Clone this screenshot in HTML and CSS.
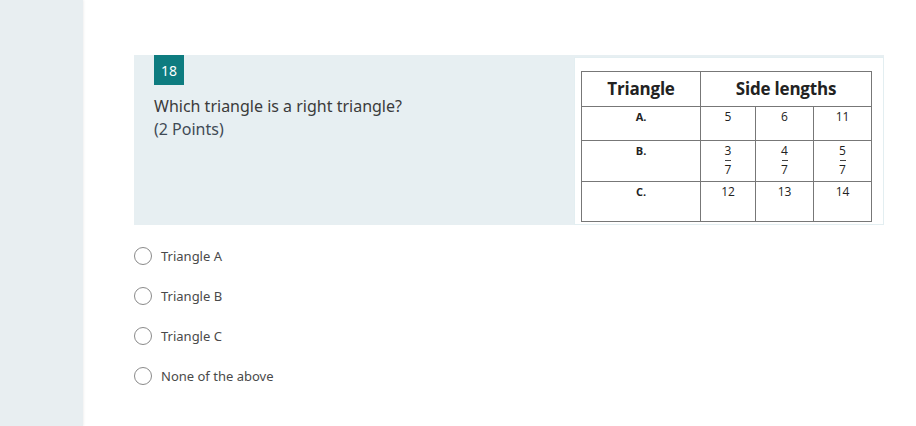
FILE: index.html
```html
<!DOCTYPE html>
<html>
<head>
<meta charset="utf-8">
<link rel="stylesheet" href="styles.css">
</head>
<body>
<div class="page">
  <aside class="sidebar"></aside>
  <main class="main">
    <section class="card">
      <div class="card-left">
        <div class="badge">18</div>
        <div class="question">Which triangle is a right triangle?<br><span class="points">(2 Points)</span></div>
      </div>
      <div class="figure">
        <table class="tri">
          <colgroup><col class="c1"><col class="c2"><col class="c3"><col class="c4"></colgroup>
          <tr class="head"><th>Triangle</th><th colspan="3">Side lengths</th></tr>
          <tr class="ra"><td class="lbl">A.</td><td>5</td><td>6</td><td>11</td></tr>
          <tr class="rb"><td class="lbl">B.</td>
            <td><span class="frac"><span>3</span><span class="bar"></span><span>7</span></span></td>
            <td><span class="frac"><span>4</span><span class="bar"></span><span>7</span></span></td>
            <td><span class="frac"><span>5</span><span class="bar"></span><span>7</span></span></td></tr>
          <tr class="rc"><td class="lbl">C.</td><td>12</td><td>13</td><td>14</td></tr>
        </table>
      </div>
    </section>
    <ul class="options">
      <li><span class="radio"></span><span>Triangle A</span></li>
      <li><span class="radio"></span><span>Triangle B</span></li>
      <li><span class="radio"></span><span>Triangle C</span></li>
      <li><span class="radio"></span><span>None of the above</span></li>
    </ul>
  </main>
</div>
</body>
</html>
```
FILE: styles.css
```css
html, body { margin: 0; padding: 0; background: #fff; }
body { font-family: "Noto Sans", "Open Sans", sans-serif; color: #333; }
.page { display: flex; width: 916px; height: 426px; overflow: hidden; }
.sidebar { width: 83px; flex: none; background: #e8eef1; box-shadow: 1px 0 2px rgba(0,0,0,0.06); }
.main { flex: 1; padding: 55px 0 0 51px; }
.card { display: flex; width: 750px; height: 170px; background: #e7eff2; box-sizing: border-box; }
.card-left { flex: 1; padding-left: 20px; }
.badge { width: 30px; height: 30px; background: #0e7c80; color: #fff; font-size: 14px; display: flex; align-items: center; justify-content: center; }
.question { margin-top: 10px; font-size: 16px; line-height: 23px; color: #3b3b3b; }
.points { color: #404a55; }
.figure { width: 310px; height: 168px; margin-top: 2px; background: #fff; border: 1px solid #e3eef1; box-sizing: border-box; padding: 13px 0 0 6px; }
.tri { border-collapse: collapse; font-family: "Open Sans", sans-serif; color: #222; }
.tri col.c1 { width: 119px; } .tri col.c2 { width: 55px; } .tri col.c3 { width: 58px; } .tri col.c4 { width: 58px; }
.tri th, .tri td { border: 1px solid #777; text-align: center; vertical-align: top; padding: 0; }
.tri th { font-size: 17px; font-weight: 700; height: 34px; line-height: 22px; vertical-align: middle; letter-spacing: -0.2px; }
.tri td { font-size: 12px; line-height: 15px; padding-top: 2px; }
.tri td.lbl { font-weight: 700; font-size: 11px; }
.ra td { height: 31px; }
.rb td { height: 38px; }
.rc td { height: 37px; }
.frac { display: inline-flex; flex-direction: column; align-items: center; line-height: 13px; }
.frac .bar { width: 6px; height: 1px; background: #444; margin: 3px 0 2px; }
.options { list-style: none; margin: 11px 0 0 0; padding: 0; }
.options li { display: flex; align-items: center; height: 40px; font-size: 13px; color: #4a4a4a; }
.radio { flex: none; width: 18px; height: 18px; border: 1px solid #8a8a8a; border-radius: 50%; margin-right: 9px; box-sizing: border-box; }
```
